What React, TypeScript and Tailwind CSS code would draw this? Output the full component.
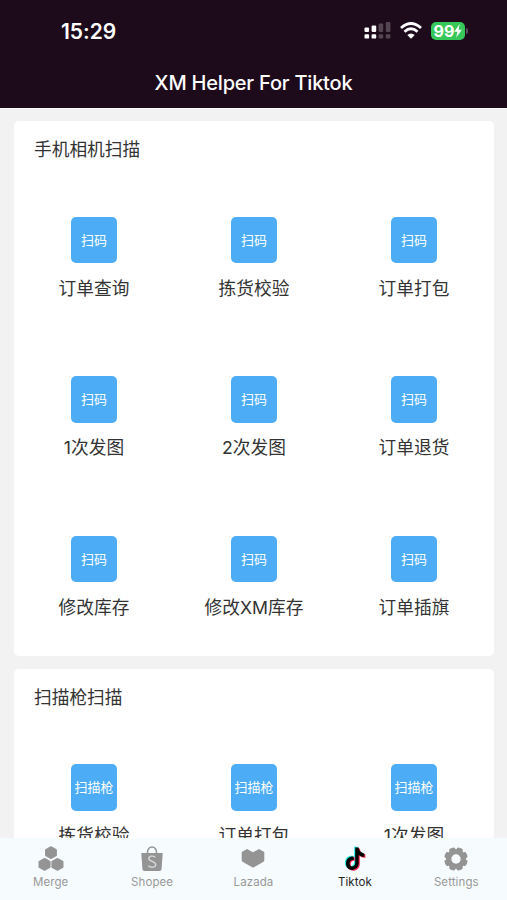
import clsx from "clsx";

type Section = {
  title: string;
  badge: string;
  items: string[];
};

const sections: Section[] = [
  {
    title: "手机相机扫描",
    badge: "扫码",
    items: ["订单查询", "拣货校验", "订单打包", "1次发图", "2次发图", "订单退货", "修改库存", "修改XM库存", "订单插旗"],
  },
  {
    title: "扫描枪扫描",
    badge: "扫描枪",
    items: ["拣货校验", "订单打包", "1次发图"],
  },
];

function SignalIcon() {
  return (
    <svg width="27" height="17" viewBox="0 0 27 17" fill="#fff">
      <rect x="0.5" y="5.4" width="4.6" height="4.6" rx="1.2" />
      <rect x="0.5" y="12.2" width="4.6" height="4.4" rx="1.2" />
      <rect x="7.6" y="3.4" width="4.6" height="6.6" rx="1.2" />
      <rect x="7.6" y="12.2" width="4.6" height="4.4" rx="1.2" />
      <g opacity="0.24">
        <rect x="14.6" y="1.4" width="4.6" height="8.6" rx="1.2" />
        <rect x="14.6" y="12.2" width="4.6" height="4.4" rx="1.2" />
        <rect x="21.8" y="0" width="4.6" height="10" rx="1.2" />
        <rect x="21.8" y="12.2" width="4.6" height="4.4" rx="1.2" />
      </g>
    </svg>
  );
}

function WifiIcon() {
  return (
    <svg width="22" height="17" viewBox="0 0 22 17" fill="none" stroke="#fff" strokeWidth="2.8">
      <path d="M1 6 Q11 -3 21 6" />
      <path d="M4.5 9.7 Q11 3.9 17.5 9.7" />
      <path d="M11 16.8 L7.3 13 Q11 9.8 14.7 13 Z" fill="#fff" stroke="none" />
    </svg>
  );
}

function MergeIcon() {
  return (
    <svg width="26" height="26" viewBox="0 0 26 26" fill="#949494" stroke="#949494" strokeWidth="1.2" strokeLinejoin="round">
      <path d="M13 .8 18.3 3.7V9.4L13 12.4 7.7 9.4V3.7Z" />
      <path d="M6.6 12.6 12 15.5V21.2L6.6 24.3 1.1 21.2V15.5Z" />
      <path d="M19.4 12.6 24.9 15.5V21.2L19.4 24.3 14 21.2V15.5Z" />
    </svg>
  );
}

function ShopeeIcon() {
  return (
    <svg width="26" height="26" viewBox="0 0 26 26" fill="none">
      <path d="M2.3 7H23.7L22.6 23Q22.4 25 20.4 25H5.6Q3.6 25 3.4 23Z" fill="#949494" />
      <path d="M8.3 7.5C8.5-1.2 17.5-1.2 17.7 7.5" stroke="#949494" strokeWidth="1.6" />
      <path
        d="M16.3 11.2C14.3 9.6 9.8 9.6 9.8 12.5C9.8 15.8 16.7 14.9 16.7 18.4C16.7 21.9 11.7 21.8 9.2 19.7"
        stroke="#d5d8da"
        strokeWidth="1.4"
      />
    </svg>
  );
}

function LazadaIcon() {
  return (
    <svg width="26" height="26" viewBox="0 0 26 26" fill="#949494">
      <path d="M7 3 13 6.2 19 3 24.3 6V14.3Q24.3 15.2 23.5 15.7L13.8 21.3Q13 21.8 12.2 21.3L2.5 15.7Q1.7 15.2 1.7 14.3V6Z" />
    </svg>
  );
}

function TiktokIcon() {
  const note = "M12.1.8H15.6C15.8 4.1 18 6.3 21.2 6.7V10.2C19.2 10.2 17.2 9.6 15.6 8.3V16.3C15.6 25 2.9 25.6 2.9 16.7C2.9 12 6.6 9.3 10.6 9.8V13.4C8.3 12.8 6.5 14.4 6.5 16.6C6.5 21 12.1 20.6 12.1 16.2Z";
  return (
    <svg width="26" height="26" viewBox="0 0 26 26">
      <path d={note} fill="#25e8e4" />
      <path d={note} fill="#fe2c55" transform="translate(2.2 1.6)" />
      <path d={note} fill="#000" transform="translate(1.1 .8)" />
    </svg>
  );
}

function SettingsIcon() {
  const angles = [0, 45, 90, 135, 180, 225, 270, 315];
  return (
    <svg width="26" height="26" viewBox="0 0 26 26">
      <g fill="#949494">
        {angles.map((a) => (
          <rect key={a} x="9.8" y="1.2" width="6.4" height="8" rx="2" transform={`rotate(${a + 22.5} 13 13)`} />
        ))}
        <circle cx="13" cy="13" r="10" />
      </g>
      <circle cx="13" cy="13" r="4.7" fill="#f8fbfe" />
    </svg>
  );
}

const tabs = [
  { name: "Merge", icon: <MergeIcon /> },
  { name: "Shopee", icon: <ShopeeIcon /> },
  { name: "Lazada", icon: <LazadaIcon /> },
  { name: "Tiktok", icon: <TiktokIcon />, active: true },
  { name: "Settings", icon: <SettingsIcon /> },
];

function ScanCard({ title, badge, items }: Section) {
  return (
    <section className="shrink-0 rounded-[5px] bg-white">
      <h2 className="flex h-14 items-center pt-[2px] pl-5 text-[17.7px] text-[#333]">{title}</h2>
      <div className="grid grid-cols-3">
        {items.map((item) => (
          <button key={item} className="flex h-[159.5px] flex-col items-center pt-[39.5px]">
            <span className="flex size-[46.5px] shrink-0 items-center justify-center rounded-[5px] bg-[#4cadf6] pt-px text-[13px] text-white">
              {badge}
            </span>
            <span className="mt-[12.4px] text-[17.7px] leading-[26px] whitespace-nowrap text-[#333]">{item}</span>
          </button>
        ))}
      </div>
    </section>
  );
}

export default function App() {
  return (
    <div className="flex h-[900px] w-[507px] flex-col overflow-hidden bg-[#f2f2f2] font-[Inter,'Noto_Sans_CJK_SC',sans-serif]">
      <header className="h-[108px] shrink-0 bg-[#1d0b1b] text-white">
        <div className="flex h-[60px] items-center justify-between pr-[39px] pl-[61px]">
          <span className="pt-[3px] text-[21px] font-semibold tracking-[-0.05px]">15:29</span>
          <div className="flex items-center pt-px">
            <SignalIcon />
            <div className="ml-[9px]">
              <WifiIcon />
            </div>
            <div className="ml-[9px] flex h-[18px] w-[34px] items-center justify-center rounded-[5px] bg-[#35c759] text-[16px] font-bold">
              99
              <svg width="8" height="14" viewBox="0 0 8 14" fill="#fff">
                <path d="M5.7 0 .2 7.7H3.4L2.2 13.6 7.9 5.7H4.6Z" />
              </svg>
            </div>
            <span className="ml-px h-1.5 w-[2px] rounded-r-full bg-[#5e505c]" />
          </div>
        </div>
        <h1 className="pt-2 text-center text-[20px] leading-[30px] font-medium tracking-[-0.2px]">XM Helper For Tiktok</h1>
      </header>

      <main className="flex min-h-0 flex-1 flex-col gap-[13px] overflow-hidden border-t border-white pt-[12.4px] pr-[13px] pl-[14px]">
        {sections.map((section) => (
          <ScanCard key={section.title} {...section} />
        ))}
      </main>

      <nav className="grid h-[62px] shrink-0 grid-cols-5 bg-[#f6fbfe]">
        {tabs.map((tab) => (
          <button key={tab.name} className="flex flex-col items-center pt-2">
            {tab.icon}
            <span
              className={clsx(
                "mt-[2px] text-[11.5px] leading-[16px] tracking-[0.1px]",
                tab.active ? "text-[#252525]" : "text-[#999]"
              )}
            >
              {tab.name}
            </span>
          </button>
        ))}
      </nav>
    </div>
  );
}
